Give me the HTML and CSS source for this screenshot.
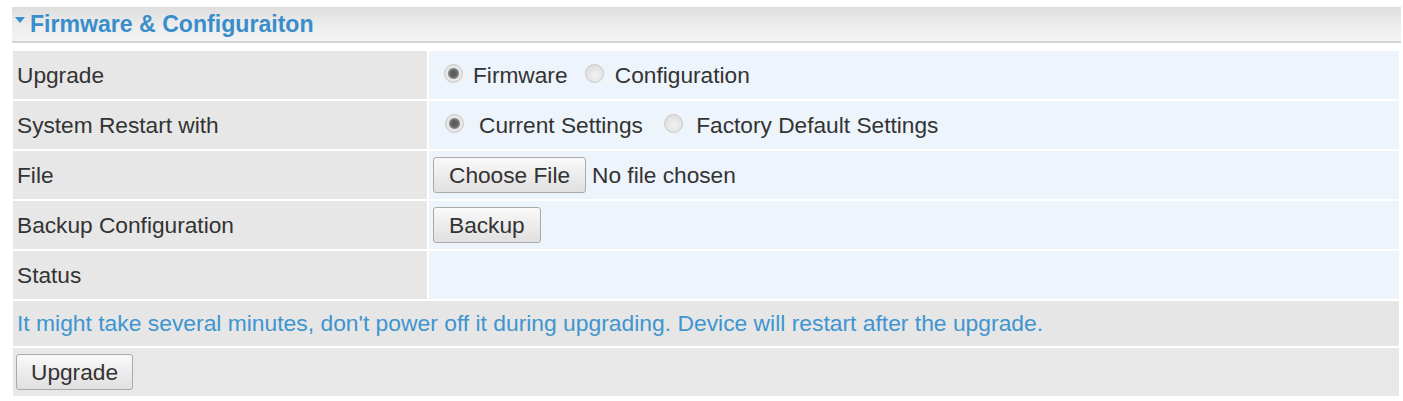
FILE: index.html
```
<!DOCTYPE html>
<html lang="en">
<head>
<meta charset="utf-8">
<title>Firmware &amp; Configuraiton</title>
<link rel="stylesheet" href="styles.css">
</head>
<body>
<div class="panel">
  <div class="panel-head">
    <svg class="caret" width="10" height="6" viewBox="0 0 10 6" aria-hidden="true"><path d="M0 0H10L5 6Z" fill="#3a8dcb"/></svg>
    <span class="panel-title">Firmware &amp; Configuraiton</span>
  </div>
  <table class="form">
    <tr>
      <td class="lbl">Upgrade</td>
      <td class="val">
        <label class="opt opt-first"><input type="radio" name="upg" checked><span>Firmware</span></label>
        <label class="opt opt-tight"><input type="radio" name="upg"><span>Configuration</span></label>
      </td>
    </tr>
    <tr>
      <td class="lbl">System Restart with</td>
      <td class="val">
        <label class="opt opt-first opt-wide"><input type="radio" name="rst" checked><span>Current Settings</span></label>
        <label class="opt opt-wide"><input type="radio" name="rst"><span>Factory Default Settings</span></label>
      </td>
    </tr>
    <tr>
      <td class="lbl">File</td>
      <td class="val">
        <label class="btn">Choose File<input class="file" type="file"></label><span class="nofile">No file chosen</span>
      </td>
    </tr>
    <tr>
      <td class="lbl">Backup Configuration</td>
      <td class="val"><button class="btn" type="button">Backup</button></td>
    </tr>
    <tr>
      <td class="lbl">Status</td>
      <td class="val"></td>
    </tr>
    <tr class="note-row">
      <td colspan="2" class="note">It might take several minutes, don't power off it during upgrading. Device will restart after the upgrade.</td>
    </tr>
    <tr class="act-row">
      <td colspan="2" class="act"><button class="btn" type="button">Upgrade</button></td>
    </tr>
  </table>
</div>
</body>
</html>
```
FILE: styles.css
```
html, body {
  margin: 0;
  padding: 0;
  background: #ffffff;
}

body {
  font-family: "Liberation Sans", Arial, sans-serif;
  font-size: 22.7px;
  color: #333333;
}

.panel {
  padding: 7px 2px 0 11px;
}

.panel-head {
  margin-left: 1px;
  height: 34px;
  border-bottom: 2px solid #d3d4d5;
  background: linear-gradient(#dedede, #eeeeee 60%, #f3f3f3);
  display: flex;
  align-items: center;
}

.caret {
  display: block;
  margin: 0 5px 0 3px;
  position: relative;
  top: -4px;
  flex: none;
}

.panel-title {
  font-weight: bold;
  font-size: 23.1px;
  color: #3a8dcb;
  line-height: 1;
  position: relative;
  top: 1px;
}

.form {
  width: 1390px;
  margin-top: 6px;
  border-collapse: separate;
  border-spacing: 2px;
}

.form td {
  height: 48px;
  padding: 0;
  vertical-align: middle;
}

.lbl {
  width: 414px;
  background: #e7e7e7;
  padding-left: 4px !important;
  box-sizing: border-box;
}

.val {
  background: #eef4fb;
  padding-left: 4px !important;
}

.opt {
  display: inline-flex;
  align-items: center;
  vertical-align: middle;
}

.opt span {
  margin-left: 10px;
}

.opt-first {
  margin-left: 11px;
}

.opt-tight {
  margin-left: 11px;
}

.opt-tight span {
  margin-left: 11px;
}

.opt-wide span {
  margin-left: 15px;
}

.opt-wide + .opt-wide {
  margin-left: 15px;
}

.opt-wide + .opt-wide span {
  margin-left: 13px;
}

.opt-first.opt-wide {
  margin-left: 12px;
}

input[type="radio"] {
  appearance: none;
  -webkit-appearance: none;
  margin: 0;
  width: 19px;
  height: 19px;
  border-radius: 50%;
  border: 1px solid #c9c9c9;
  background: radial-gradient(circle at 55% 60%, #f2f2f2 0, #e2e2e2 60%, #d2d2d2 100%);
  box-sizing: border-box;
  position: relative;
  top: -2px;
}

input[type="radio"]:checked {
  background: radial-gradient(circle at 50% 50%, #555555 0, #666666 3.5px, #8a8a8a 5px, #e9e9e9 6px, #dcdcdc 100%);
}

.btn {
  display: inline-flex;
  align-items: center;
  height: 36px;
  box-sizing: border-box;
  padding: 0 15px;
  border: 1px solid #a9a9a9;
  border-radius: 3px;
  background: linear-gradient(#fafafa, #ececec 50%, #e0e0e0);
  font-family: "Liberation Sans", Arial, sans-serif;
  font-size: 22.7px;
  color: #333333;
  vertical-align: middle;
  margin: 0;
}

.file {
  display: none;
}

.nofile {
  margin-left: 6px;
  vertical-align: middle;
}

.note-row td {
  height: 45px;
}

.note {
  background: #e6e6e6;
  color: #3f95cf;
  padding-left: 4px !important;
  font-size: 22.85px;
}

.act-row td {
  height: 48px;
}

.act {
  background: #e8e8e8;
  padding-left: 3px !important;
}

.act .btn {
  padding: 0 14px;
}
```
